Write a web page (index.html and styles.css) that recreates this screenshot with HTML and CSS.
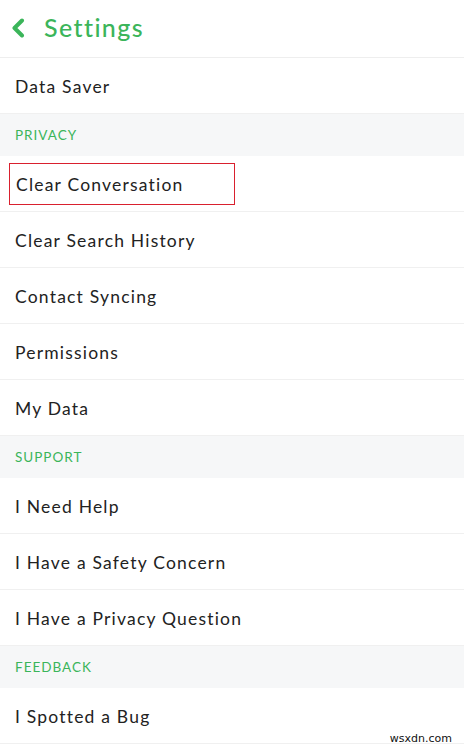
FILE: index.html
```html
<!DOCTYPE html>
<html>
<head>
<meta charset="utf-8">
<link rel="stylesheet" href="styles.css">
</head>
<body>
<div class="screen">
  <header class="topbar">
    <svg class="back" width="14" height="20" viewBox="0 0 14 20"><path d="M11 2.5 L3.5 10 L11 17.5" fill="none" stroke="#3bb55a" stroke-width="4" stroke-linecap="round" stroke-linejoin="round"/></svg>
    <h1 class="title">Settings</h1>
  </header>
  <div class="row">Data Saver</div>
  <div class="section">PRIVACY</div>
  <div class="row"><span class="highlight">Clear Conversation</span></div>
  <div class="row">Clear Search History</div>
  <div class="row">Contact Syncing</div>
  <div class="row">Permissions</div>
  <div class="row">My Data</div>
  <div class="section">SUPPORT</div>
  <div class="row">I Need Help</div>
  <div class="row">I Have a Safety Concern</div>
  <div class="row">I Have a Privacy Question</div>
  <div class="section">FEEDBACK</div>
  <div class="row">I Spotted a Bug</div>
  <div class="watermark">wsxdn.com</div>
</div>
</body>
</html>
```
FILE: styles.css
```css
* { box-sizing: border-box; }
html, body { margin: 0; padding: 0; background: #fff; }
body { font-family: Lato, "Noto Sans", sans-serif; color: #222; }
.screen { position: relative; width: 464px; height: 749px; overflow: hidden; }
.topbar {
  height: 58px;
  display: flex;
  align-items: center;
  padding-left: 11px;
  padding-bottom: 3px;
  border-bottom: 1px solid #eeeeee;
}
.back { margin-right: 19px; margin-top: 1px; }
.title {
  margin: 0;
  font-size: 25px;
  font-weight: 500;
  color: #3bb55a;
  letter-spacing: 1.4px;
}
.row {
  height: 56px;
  display: flex;
  align-items: center;
  padding-left: 15px;
  padding-top: 2px;
  font-size: 17.5px;
  letter-spacing: 1.2px;
  border-bottom: 1px solid #f0f0f0;
}
.section {
  height: 42px;
  display: flex;
  align-items: center;
  padding-left: 15px;
  background: #f6f7f8;
  color: #3bb55a;
  font-size: 13.5px;
  letter-spacing: 1px;
}
.highlight {
  display: flex;
  align-items: center;
  margin-left: -6px;
  margin-top: -2px;
  padding-left: 6px;
  padding-top: 2px;
  width: 226px;
  height: 42px;
  border: 1.5px solid #d9202e;
}
.watermark {
  position: absolute;
  right: 12px;
  bottom: 4px;
  font-family: "DejaVu Sans", sans-serif;
  font-size: 11px;
  letter-spacing: 0;
  color: #111;
}
```
